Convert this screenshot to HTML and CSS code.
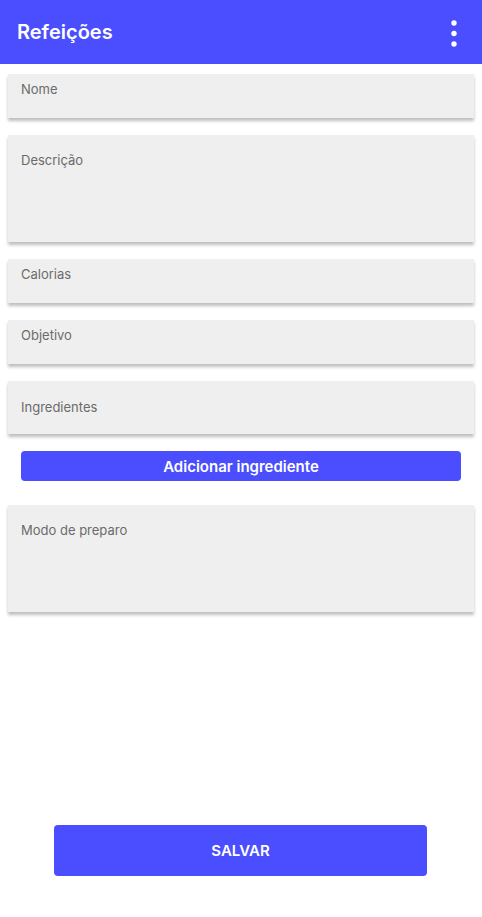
FILE: index.html
```html
<!DOCTYPE html>
<html lang="pt-BR">
<head>
<meta charset="utf-8">
<title>Refeições</title>
<link rel="stylesheet" href="styles.css">
</head>
<body>
<div class="page">
  <header class="appbar">
    <h1 class="title">Refeições</h1>
    <button class="menu" aria-label="menu">
      <svg width="10" height="30" viewBox="0 0 10 30"><circle cx="5" cy="5" r="2.7" fill="#fff"/><circle cx="5" cy="15.5" r="2.7" fill="#fff"/><circle cx="5" cy="26" r="2.7" fill="#fff"/></svg>
    </button>
  </header>
  <main class="form">
    <div class="field"><span class="label">Nome</span></div>
    <div class="field tall"><span class="label">Descrição</span></div>
    <div class="field"><span class="label">Calorias</span></div>
    <div class="field"><span class="label">Objetivo</span></div>
    <div class="field mid"><span class="label">Ingredientes</span></div>
    <button class="add">Adicionar ingrediente</button>
    <div class="field tall"><span class="label">Modo de preparo</span></div>
  </main>
  <div class="footer">
    <button class="save">SALVAR</button>
  </div>
</div>
</body>
</html>
```
FILE: styles.css
```css
* { box-sizing: border-box; }
html, body { margin: 0; padding: 0; }
body {
  font-family: Inter, "Noto Sans", "Liberation Sans", sans-serif;
  background: #fff;
}
.page {
  min-height: 917px;
  display: flex;
  flex-direction: column;
}
.appbar {
  height: 64px;
  background: #4a4eff;
  display: flex;
  align-items: center;
  justify-content: space-between;
  padding: 0 23px 0 17px;
}
.title {
  margin: 0;
  color: #fff;
  font-size: 20px;
  font-weight: 600;
  letter-spacing: 0;
}
.menu {
  border: 0;
  background: none;
  padding: 0;
  display: flex;
  margin-top: 1px;
}
.form {
  padding: 10px 8px 0;
  display: flex;
  flex-direction: column;
}
.field {
  background: #efefef;
  height: 44px;
  padding: 7px 13px 0;
  margin-bottom: 17px;
  box-shadow: 0 3px 3px rgba(0, 0, 0, 0.25);
}
.field.tall {
  height: 107px;
  padding-top: 17px;
}
.field.mid {
  height: 53px;
  padding-top: 18px;
  margin-bottom: 17px;
}
.label {
  display: block;
  font-size: 13px;
  line-height: 16px;
  color: #6b6b6b;
}
.add {
  margin: 0 13px 24px;
  height: 30px;
  border: 0;
  border-radius: 4px;
  background: #4a4eff;
  color: #fff;
  font-family: inherit;
  font-size: 15px;
  font-weight: 600;
}
.footer {
  margin-top: auto;
  padding-bottom: 41px;
  display: flex;
  justify-content: center;
}
.save {
  width: 373px;
  height: 51px;
  border: 0;
  border-radius: 4px;
  background: #4a4eff;
  color: #fff;
  font-family: inherit;
  font-size: 15px;
  font-weight: 600;
  margin-right: 1px;
}
```
